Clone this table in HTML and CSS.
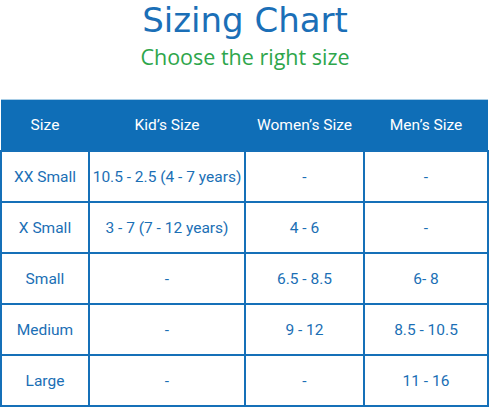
FILE: index.html
```html
<!DOCTYPE html>
<html>
    <head>
        <meta name="viewport" content="width=device-width, initial-scale=1.0">
        <title>Sizing Chart</title>
        <link rel="stylesheet" href="styles.css">
    </head>
    <body>
        <h1 class="title">Sizing Chart</h1>
        <p class="subtitle">Choose the right size</p>
        <table class="chart">
            <thead>
                <tr>
                    <th class="colSize">Size</th>
                    <th class="colKid">Kid’s Size</th>
                    <th class="colWomen">Women’s Size</th>
                    <th>Men’s Size</th>
                </tr>
            </thead>
            <tbody>
                <tr><td>XX Small</td><td>10.5 - 2.5 (4 - 7 years)</td><td>-</td><td>-</td></tr>
                <tr><td>X Small</td><td>3 - 7 (7 - 12 years)</td><td>4 - 6</td><td>-</td></tr>
                <tr><td>Small</td><td>-</td><td>6.5 - 8.5</td><td>6- 8</td></tr>
                <tr><td>Medium</td><td>-</td><td>9 - 12</td><td>8.5 - 10.5</td></tr>
                <tr><td>Large</td><td>-</td><td>-</td><td>11 - 16</td></tr>
            </tbody>
        </table>
    </body>
</html>
```

FILE: styles.css
```css
body{
    margin: 0px;
    background-color: white;
    font-family: Roboto, "Liberation Sans", sans-serif;
    text-align: center;
}
.title{
    font-family: "DejaVu Sans", "Open Sans", sans-serif;
    font-weight: 400;
    font-size: 34px;
    line-height: 40px;
    color: #1b6fb7;
    margin: 0px;
}
.subtitle{
    font-family: "Open Sans", Lato, sans-serif;
    font-size: 21.5px;
    line-height: 26px;
    color: #2ea64b;
    margin: 0px;
    padding-top: 4px;
}
.chart{
    margin-top: 29px;
    width: 489px;
    border-collapse: collapse;
    border-top: 1px solid #a8cde6;
    table-layout: fixed;
}
.chart th{
    background-color: #0f6eb7;
    color: white;
    font-weight: 400;
    font-size: 15.5px;
    height: 50px;
    padding: 0px;
}
.chart td{
    border: 2px solid #1570b8;
    color: #1b6fb5;
    font-size: 15.5px;
    height: 49px;
    padding: 0px;
}
.colSize{
    width: 88px;
}
.colKid{
    width: 156px;
}
.colWomen{
    width: 119px;
}
```
